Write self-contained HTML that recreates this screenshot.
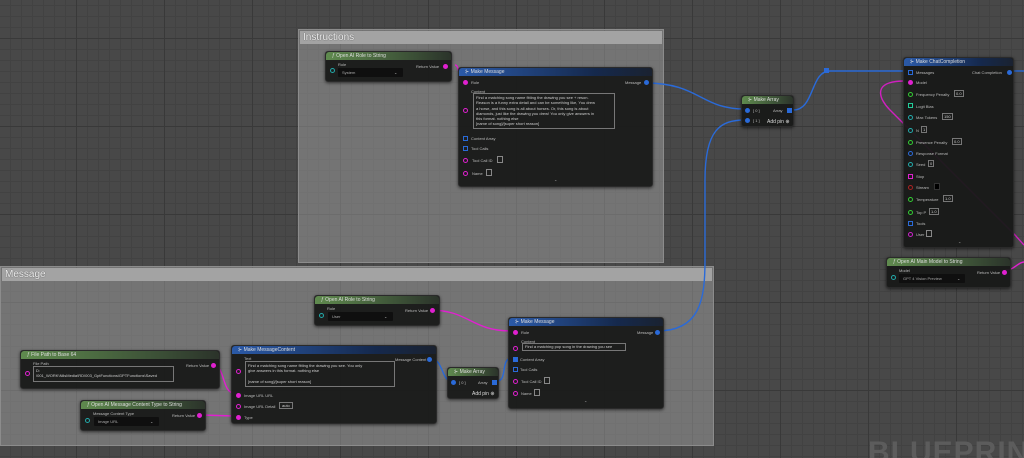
<!DOCTYPE html>
<html style="width:1024px;height:458px;overflow:hidden"><head><meta charset="utf-8"><style>
*{margin:0;padding:0;box-sizing:border-box}
body{width:1024px;height:458px;overflow:hidden;position:relative;font-family:"Liberation Sans",sans-serif;
background-color:#484848;
background-image:linear-gradient(#393939 1px,transparent 1px),linear-gradient(90deg,#393939 1px,transparent 1px),linear-gradient(#424242 1px,transparent 1px),linear-gradient(90deg,#424242 1px,transparent 1px);
background-size:88px 88px,88px 88px,11px 11px,11px 11px;background-position:-12px 38px,-12px 38px,-12px 38px,-12px 38px}
.c{position:absolute;background:rgba(160,160,160,.5);border:1px solid #8c8c8c}
.c .h{height:13px;background:#a3a3a3;color:#eee;font-size:10px;line-height:13px;padding-left:3px;text-shadow:0 0 1px #333;margin:1px}
.n{position:absolute;background:rgba(24,25,24,.95);border-radius:3px;box-shadow:0 1px 3px rgba(0,0,0,.6);color:#ccc;font-size:4.5px;border:1px solid #2a2a2a}
.n .t{height:8px;border-radius:3px 3px 0 0;font-size:5px;line-height:8px;padding-left:6px;color:#ddd;white-space:nowrap;overflow:hidden}
.g .t{background:linear-gradient(90deg,#5f8a4e,#3b4f36 70%,#2b332a)}
.b .t{background:linear-gradient(90deg,#2b5aa8,#15294d 70%,#1a2230)}
.p{position:absolute;font-size:4px;color:#bbb;white-space:nowrap}
.d{position:absolute;width:5px;height:5px;border-radius:50%}
.box{position:absolute;border:1px solid #777;color:#ccc;font-size:4px;line-height:5.3px;padding:1px 2px;overflow:hidden;white-space:nowrap}
.dd{position:absolute;background:#0f0f0f;color:#aaa;font-size:4px;padding:2px 4px;border-radius:1px;white-space:nowrap}
.sq{position:absolute;width:6px;height:7px;border:1px solid #888}
</style></head><body>

<div class="c" style="left:298px;top:29px;width:366px;height:234px"><div class="h">Instructions</div></div>
<div class="c" style="left:0;top:266px;width:714px;height:180px"><div class="h">Message</div></div>

<svg style="position:absolute;left:0;top:0" width="1024" height="458">
<g fill="none" stroke-width="1.4">
<path d="M645 83 C700 83,700 109,745 109" stroke="#2a6ad8"/>
<path d="M657 331 C700 331,705 300,705 260 L705 180 C705 130,720 120,745 120" stroke="#2a6ad8"/>
<path d="M793 110 C815 110,810 71,830 71 L905 71" stroke="#2a6ad8"/>
<path d="M428 358 C445 358,440 381,452 381" stroke="#2a6ad8"/>
<path d="M497 381 C508 381,500 358,512 358" stroke="#2a6ad8"/>
<path d="M1013 71 L1024 71" stroke="#2a6ad8"/>
<path d="M455 65 C460 65,458 82,463 82" stroke="#e020d0"/>
<path d="M429 310 C470 310,470 331,512 331" stroke="#e020d0"/>
<path d="M213 365 C225 365,222 393,234 393" stroke="#e020d0"/>
<path d="M201 415 L234 416" stroke="#e020d0"/>
<path d="M905 81 C870 81,880 100,890 110 L1015 235 L1024 245" stroke="#d020c0"/>
<path d="M1005 270 C1015 270,1018 262,1024 262" stroke="#e020d0"/>
</g>
<rect x="824" y="68" width="5" height="5" fill="#2a6ad8"/>
</svg>

<div class="n g" style="left:325px;top:51px;width:127px;height:31px"><div class="t">ƒ Open AI Role to String</div>
<div class="p" style="left:12px;top:10px">Role</div><div class="dd" style="left:12px;top:16px;width:65px">System</div><div class="p" style="left:68px;top:18px">⌄</div>
<div class="d" style="left:4px;top:16px;border:1px solid #2aa"></div>
<div class="p" style="left:90px;top:12px">Return Value</div><div class="d" style="left:117px;top:12px;background:#e020d0"></div></div>

<div class="n b" style="left:458px;top:67px;width:195px;height:120px"><div class="t">⊱ Make Message</div>
<div class="d" style="left:4px;top:12px;background:#e020d0"></div><div class="p" style="left:12px;top:12px">Role</div>
<div class="p" style="left:166px;top:12px">Message</div><div class="d" style="left:185px;top:12px;background:#2a6ad8"></div>
<div class="p" style="left:12px;top:21px">Content</div>
<div class="d" style="left:4px;top:40px;border:1px solid #e020d0"></div>
<div class="box" style="left:14px;top:25px;width:142px;height:36px">Find a matching song name fitting the drawing you see + reson.<br>Reason is a funny extra detail and can be something like, You drew<br>a horse, and this song is all about horses. Or, this song is about<br>diamonds, just like the drawing you drew! You only give answers in<br>this format. nothing else<br>[name of song]/[super short reason]</div>
<div class="sq" style="left:4px;top:68px;width:5px;height:5px;border-color:#2a6ad8"></div><div class="p" style="left:12px;top:68px">Content Array</div>
<div class="sq" style="left:4px;top:78px;width:5px;height:5px;border-color:#2a6ad8"></div><div class="p" style="left:12px;top:78px">Tool Calls</div>
<div class="d" style="left:4px;top:90px;border:1px solid #e020d0"></div><div class="p" style="left:13px;top:90px">Tool Call ID</div><div class="sq" style="left:38px;top:88px"></div>
<div class="d" style="left:4px;top:103px;border:1px solid #e020d0"></div><div class="p" style="left:13px;top:103px">Name</div><div class="sq" style="left:27px;top:101px"></div>
<div class="p" style="left:95px;top:111px">⌃</div></div>

<div class="n g" style="left:741px;top:95px;width:53px;height:32px"><div class="t">⊱ Make Array</div>
<div class="d" style="left:3px;top:12px;background:#2a6ad8"></div><div class="p" style="left:11px;top:12px">[ 0 ]</div>
<div class="p" style="left:31px;top:12px">Array</div><div class="sq" style="left:45px;top:12px;width:5px;height:5px;background:#2a6ad8;border:none"></div>
<div class="d" style="left:3px;top:22px;background:#2a6ad8"></div><div class="p" style="left:11px;top:22px">[ 1 ]</div>
<div class="p" style="left:25px;top:23px;font-size:5px;color:#ddd">Add pin ⊕</div></div>

<div class="n b" style="left:903px;top:57px;width:111px;height:191px"><div class="t">⊱ Make ChatCompletion</div>
<div class="p" style="left:68px;top:12px">Chat Completion</div><div class="d" style="left:103px;top:12px;background:#2a6ad8"></div>
<div class="sq" style="left:4px;top:12px;width:5px;height:5px;border-color:#2a6ad8"></div><div class="p" style="left:12px;top:12px">Messages</div>
<div class="d" style="left:4px;top:22px;background:#e020d0"></div><div class="p" style="left:12px;top:22px">Model</div>
<div class="d" style="left:4px;top:34px;border:1px solid #3c3"></div><div class="p" style="left:12px;top:34px">Frequency Penalty</div><div class="box" style="left:50px;top:32px;padding:0 1px">0.0</div>
<div class="sq" style="left:4px;top:45px;width:5px;height:5px;border-color:#2c9"></div><div class="p" style="left:12px;top:46px">Logit Bias</div>
<div class="d" style="left:4px;top:57px;border:1px solid #2aa"></div><div class="p" style="left:12px;top:57px">Max Tokens</div><div class="box" style="left:38px;top:55px;padding:0 1px">150</div>
<div class="d" style="left:4px;top:70px;border:1px solid #2aa"></div><div class="p" style="left:12px;top:70px">N</div><div class="box" style="left:17px;top:68px;padding:0 1px">1</div>
<div class="d" style="left:4px;top:82px;border:1px solid #3c3"></div><div class="p" style="left:12px;top:82px">Presence Penalty</div><div class="box" style="left:48px;top:80px;padding:0 1px">0.0</div>
<div class="d" style="left:4px;top:93px;border:1px solid #2a6ad8"></div><div class="p" style="left:12px;top:93px">Response Format</div>
<div class="d" style="left:4px;top:104px;border:1px solid #2aa"></div><div class="p" style="left:12px;top:104px">Seed</div><div class="box" style="left:24px;top:102px;padding:0 1px">0</div>
<div class="sq" style="left:4px;top:116px;width:5px;height:5px;border-color:#e020d0"></div><div class="p" style="left:12px;top:116px">Stop</div>
<div class="d" style="left:4px;top:127px;border:1px solid #a22"></div><div class="p" style="left:12px;top:127px">Stream</div><div class="sq" style="left:30px;top:125px;background:#000;border-color:#333"></div>
<div class="d" style="left:4px;top:139px;border:1px solid #3c3"></div><div class="p" style="left:12px;top:139px">Temperature</div><div class="box" style="left:39px;top:137px;padding:0 1px">1.0</div>
<div class="d" style="left:4px;top:152px;border:1px solid #3c3"></div><div class="p" style="left:12px;top:152px">Top P</div><div class="box" style="left:25px;top:150px;padding:0 1px">1.0</div>
<div class="sq" style="left:4px;top:163px;width:5px;height:5px;border-color:#2a6ad8"></div><div class="p" style="left:12px;top:163px">Tools</div>
<div class="d" style="left:4px;top:174px;border:1px solid #c2c"></div><div class="p" style="left:12px;top:174px">User</div><div class="sq" style="left:22px;top:172px"></div>
<div class="p" style="left:54px;top:183px">⌃</div></div>

<div class="n g" style="left:886px;top:257px;width:125px;height:31px"><div class="t">ƒ Open AI Main Model to String</div>
<div class="p" style="left:12px;top:10px">Model</div><div class="dd" style="left:12px;top:16px;width:66px">GPT 4 Vision Preview</div><div class="p" style="left:70px;top:18px">⌄</div>
<div class="d" style="left:4px;top:17px;border:1px solid #2aa"></div>
<div class="p" style="left:90px;top:12px">Return Value</div><div class="d" style="left:115px;top:12px;background:#e020d0"></div></div>

<div class="n g" style="left:314px;top:295px;width:126px;height:31px"><div class="t">ƒ Open AI Role to String</div>
<div class="p" style="left:12px;top:10px">Role</div><div class="dd" style="left:13px;top:16px;width:65px">User</div><div class="p" style="left:69px;top:18px">⌄</div>
<div class="d" style="left:4px;top:17px;border:1px solid #2aa"></div>
<div class="p" style="left:90px;top:12px">Return Value</div><div class="d" style="left:115px;top:12px;background:#e020d0"></div></div>

<div class="n b" style="left:508px;top:317px;width:156px;height:92px"><div class="t">⊱ Make Message</div>
<div class="d" style="left:4px;top:12px;background:#e020d0"></div><div class="p" style="left:12px;top:12px">Role</div>
<div class="p" style="left:128px;top:12px">Message</div><div class="d" style="left:146px;top:12px;background:#2a6ad8"></div>
<div class="p" style="left:12px;top:21px">Content</div>
<div class="d" style="left:4px;top:28px;border:1px solid #e020d0"></div>
<div class="box" style="left:13px;top:25px;width:104px;height:8px;padding:0 2px;line-height:6px">Find a matching pop song in the drawing you see</div>
<div class="sq" style="left:4px;top:39px;width:5px;height:5px;background:#2a6ad8;border:none"></div><div class="p" style="left:11px;top:39px">Content Array</div>
<div class="sq" style="left:4px;top:49px;width:5px;height:5px;border-color:#2a6ad8"></div><div class="p" style="left:11px;top:49px">Tool Calls</div>
<div class="d" style="left:4px;top:61px;border:1px solid #e020d0"></div><div class="p" style="left:12px;top:61px">Tool Call ID</div><div class="sq" style="left:35px;top:59px"></div>
<div class="d" style="left:4px;top:73px;border:1px solid #e020d0"></div><div class="p" style="left:12px;top:73px">Name</div><div class="sq" style="left:25px;top:71px"></div>
<div class="p" style="left:75px;top:82px">⌃</div></div>

<div class="n g" style="left:20px;top:350px;width:200px;height:39px"><div class="t">ƒ File Path to Base 64</div>
<div class="p" style="left:12px;top:10px">File Path</div>
<div class="d" style="left:4px;top:20px;border:1px solid #e020d0"></div>
<div class="box" style="left:12px;top:15px;width:141px;height:16px">D:<br>\001_WORK\NilsMedia\RD\003_GptFunctions\GPTFunctions\Saved</div>
<div class="p" style="left:165px;top:12px">Return Value</div><div class="d" style="left:190px;top:12px;background:#e020d0"></div></div>

<div class="n g" style="left:80px;top:400px;width:126px;height:31px"><div class="t">ƒ Open AI Message Content Type to String</div>
<div class="p" style="left:12px;top:10px">Message Content Type</div><div class="dd" style="left:13px;top:16px;width:65px">Image URL</div><div class="p" style="left:69px;top:18px">⌄</div>
<div class="d" style="left:4px;top:17px;border:1px solid #2aa"></div>
<div class="p" style="left:91px;top:12px">Return Value</div><div class="d" style="left:116px;top:12px;background:#e020d0"></div></div>

<div class="n b" style="left:231px;top:345px;width:206px;height:79px"><div class="t">⊱ Make MessageContent</div>
<div class="p" style="left:12px;top:10px">Text</div>
<div class="d" style="left:4px;top:23px;border:1px solid #e020d0"></div>
<div class="box" style="left:13px;top:15px;width:150px;height:26px">Find a matching  song name fitting the drawing you see. You only<br>give answers in this format. nothing else<br><br>[name of song]/[super short reason]</div>
<div class="p" style="left:163px;top:11px">Message Content</div><div class="d" style="left:195px;top:11px;background:#2a6ad8"></div>
<div class="d" style="left:4px;top:47px;background:#e020d0"></div><div class="p" style="left:12px;top:47px">Image URL URL</div>
<div class="d" style="left:4px;top:58px;border:1px solid #e020d0"></div><div class="p" style="left:12px;top:58px">Image URL Detail</div><div class="box" style="left:47px;top:56px;padding:0 2px">auto</div>
<div class="d" style="left:4px;top:69px;background:#e020d0"></div><div class="p" style="left:12px;top:69px">Type</div></div>

<div class="n g" style="left:447px;top:367px;width:52px;height:32px"><div class="t">⊱ Make Array</div>
<div class="d" style="left:3px;top:12px;background:#2a6ad8"></div><div class="p" style="left:11px;top:12px">[ 0 ]</div>
<div class="p" style="left:30px;top:12px">Array</div><div class="sq" style="left:44px;top:12px;width:5px;height:5px;background:#2a6ad8;border:none"></div>
<div class="p" style="left:24px;top:23px;font-size:5px;color:#ddd">Add pin ⊕</div></div>

<div style="position:absolute;left:868px;top:438px;height:20px;overflow:hidden;font-size:30px;line-height:30px;font-weight:bold;color:#5c5c5c;letter-spacing:1px;white-space:nowrap">BLUEPRINT</div>
</body></html>
